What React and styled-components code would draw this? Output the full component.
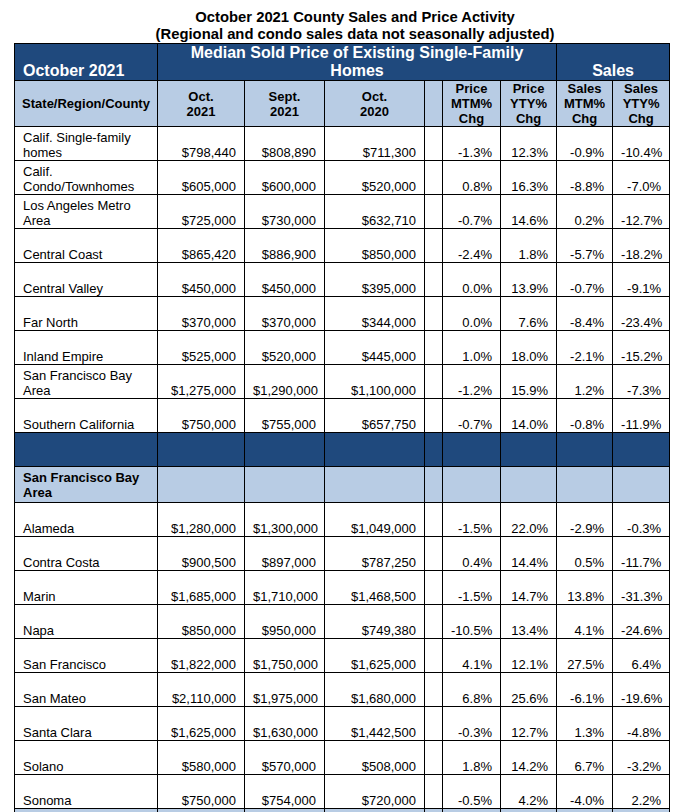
import React from 'react';
import styled, { createGlobalStyle } from 'styled-components';

const GlobalStyle = createGlobalStyle`
  html, body { margin: 0; padding: 0; background: #ffffff; }
  body { font-family: "Liberation Sans", Arial, Helvetica, sans-serif; color: #000; }
`;

const DARK = '#1f497d';
const LIGHT = '#b8cce4';

const Page = styled.div`
  padding: 9px 0 0 14px;
`;

const Title = styled.h1`
  margin: 0;
  width: 682px;
  text-align: center;
  font-size: 14.8px;
  line-height: 17px;
  font-weight: 700;
`;

const Table = styled.table`
  border-collapse: collapse;
  table-layout: fixed;
  width: 656px;
`;

const Col = styled.col`
  width: ${p => p.$w}px;
`;

const BandCell = styled.th`
  border: 1px solid #000;
  background: ${DARK};
  color: #fff;
  font-size: 16px;
  line-height: 18px;
  font-weight: 700;
  height: 36px;
  padding: 0 8px 0 8px;
  vertical-align: bottom;
  text-align: ${p => p.$align || 'center'};
`;

const HeadCell = styled.th`
  border: 1px solid #000;
  background: ${LIGHT};
  font-size: 13px;
  line-height: 15px;
  font-weight: 700;
  height: 45px;
  padding: 0 2px;
  vertical-align: middle;
  text-align: center;
`;

const Cell = styled.td`
  border: 1px solid #000;
  font-size: 13px;
  line-height: 15px;
  height: 33px;
  padding: 0 8px 0 8px;
  vertical-align: bottom;
  text-align: ${p => (p.$name ? 'left' : 'right')};
  white-space: ${p => (p.$name ? 'normal' : 'nowrap')};
`;

const SpacerCell = styled.td`
  border: 1px solid #000;
  background: ${DARK};
  height: 33px;
  padding: 0;
`;

const SectionCell = styled.td`
  border: 1px solid #000;
  background: ${LIGHT};
  height: 35px;
  padding: 0 8px;
  font-size: 13px;
  line-height: 15px;
  font-weight: 700;
  vertical-align: middle;
  text-align: left;
`;

const widths = [143, 87, 80, 100, 18, 58, 56, 56, 57];

const state = [
  ['Calif. Single-family homes', '$798,440', '$808,890', '$711,300', '-1.3%', '12.3%', '-0.9%', '-10.4%'],
  ['Calif. Condo/Townhomes', '$605,000', '$600,000', '$520,000', '0.8%', '16.3%', '-8.8%', '-7.0%'],
  ['Los Angeles Metro Area', '$725,000', '$730,000', '$632,710', '-0.7%', '14.6%', '0.2%', '-12.7%'],
  ['Central Coast', '$865,420', '$886,900', '$850,000', '-2.4%', '1.8%', '-5.7%', '-18.2%'],
  ['Central Valley', '$450,000', '$450,000', '$395,000', '0.0%', '13.9%', '-0.7%', '-9.1%'],
  ['Far North', '$370,000', '$370,000', '$344,000', '0.0%', '7.6%', '-8.4%', '-23.4%'],
  ['Inland Empire', '$525,000', '$520,000', '$445,000', '1.0%', '18.0%', '-2.1%', '-15.2%'],
  ['San Francisco Bay Area', '$1,275,000', '$1,290,000', '$1,100,000', '-1.2%', '15.9%', '1.2%', '-7.3%'],
  ['Southern California', '$750,000', '$755,000', '$657,750', '-0.7%', '14.0%', '-0.8%', '-11.9%'],
];

const bay = [
  ['Alameda', '$1,280,000', '$1,300,000', '$1,049,000', '-1.5%', '22.0%', '-2.9%', '-0.3%'],
  ['Contra Costa', '$900,500', '$897,000', '$787,250', '0.4%', '14.4%', '0.5%', '-11.7%'],
  ['Marin', '$1,685,000', '$1,710,000', '$1,468,500', '-1.5%', '14.7%', '13.8%', '-31.3%'],
  ['Napa', '$850,000', '$950,000', '$749,380', '-10.5%', '13.4%', '4.1%', '-24.6%'],
  ['San Francisco', '$1,822,000', '$1,750,000', '$1,625,000', '4.1%', '12.1%', '27.5%', '6.4%'],
  ['San Mateo', '$2,110,000', '$1,975,000', '$1,680,000', '6.8%', '25.6%', '-6.1%', '-19.6%'],
  ['Santa Clara', '$1,625,000', '$1,630,000', '$1,442,500', '-0.3%', '12.7%', '1.3%', '-4.8%'],
  ['Solano', '$580,000', '$570,000', '$508,000', '1.8%', '14.2%', '6.7%', '-3.2%'],
  ['Sonoma', '$750,000', '$754,000', '$720,000', '-0.5%', '4.2%', '-4.0%', '2.2%'],
];

function DataRow({ r }) {
  return (
    <tr>
      <Cell $name>{r[0]}</Cell>
      <Cell>{r[1]}</Cell>
      <Cell>{r[2]}</Cell>
      <Cell>{r[3]}</Cell>
      <Cell />
      <Cell>{r[4]}</Cell>
      <Cell>{r[5]}</Cell>
      <Cell>{r[6]}</Cell>
      <Cell>{r[7]}</Cell>
    </tr>
  );
}

function SectionRow({ label }) {
  return (
    <tr>
      <SectionCell>{label}</SectionCell>
      {widths.slice(1).map((_, i) => (
        <SectionCell key={i} />
      ))}
    </tr>
  );
}

export default function App() {
  return (
    <>
      <GlobalStyle />
      <Page>
        <Title>
          October 2021 County Sales and Price Activity
          <br />
          (Regional and condo sales data not seasonally adjusted)
        </Title>
        <Table>
          <colgroup>
            {widths.map((w, i) => (
              <Col key={i} $w={w} />
            ))}
          </colgroup>
          <thead>
            <tr>
              <BandCell $align="left">October 2021</BandCell>
              <BandCell colSpan={6}>Median Sold Price of Existing Single-Family Homes</BandCell>
              <BandCell colSpan={2}>Sales</BandCell>
            </tr>
            <tr>
              <HeadCell>State/Region/County</HeadCell>
              <HeadCell>Oct.<br />2021</HeadCell>
              <HeadCell>Sept.<br />2021</HeadCell>
              <HeadCell>Oct.<br />2020</HeadCell>
              <HeadCell />
              <HeadCell>Price<br />MTM%<br />Chg</HeadCell>
              <HeadCell>Price<br />YTY%<br />Chg</HeadCell>
              <HeadCell>Sales<br />MTM%<br />Chg</HeadCell>
              <HeadCell>Sales<br />YTY%<br />Chg</HeadCell>
            </tr>
          </thead>
          <tbody>
            {state.map((r) => (
              <DataRow key={r[0]} r={r} />
            ))}
            <tr>
              {widths.map((_, i) => (
                <SpacerCell key={i} />
              ))}
            </tr>
            <SectionRow label="San Francisco Bay Area" />
            {bay.map((r) => (
              <DataRow key={r[0]} r={r} />
            ))}
            <SectionRow label="" />
          </tbody>
        </Table>
      </Page>
    </>
  );
}
